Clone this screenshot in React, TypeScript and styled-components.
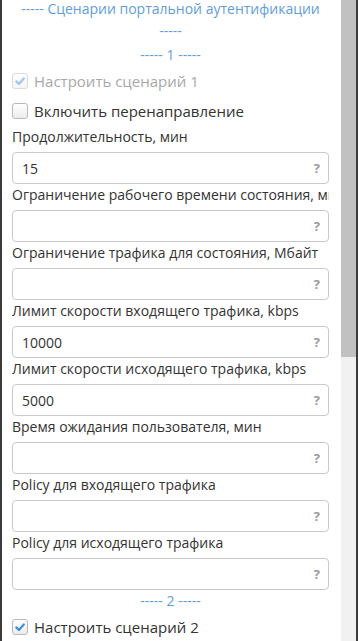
import styled, { createGlobalStyle } from "styled-components";

const GlobalStyle = createGlobalStyle`
  html, body {
    margin: 0;
    padding: 0;
    background: #fff;
  }
  body {
    font-family: "Open Sans", "Liberation Sans", sans-serif;
    color: #333;
  }
`;

type Field = {
  label: string;
  value?: string;
};

const fields: Field[] = [
  { label: "Продолжительность, мин", value: "15" },
  { label: "Ограничение рабочего времени состояния, мин" },
  { label: "Ограничение трафика для состояния, Мбайт" },
  { label: "Лимит скорости входящего трафика, kbps", value: "10000" },
  { label: "Лимит скорости исходящего трафика, kbps", value: "5000" },
  { label: "Время ожидания пользователя, мин" },
  { label: "Policy для входящего трафика" },
  { label: "Policy для исходящего трафика" },
];

function Check({ checked, disabled }: { checked?: boolean; disabled?: boolean }) {
  return (
    <Box $disabled={disabled}>
      {checked && (
        <svg width="12" height="12" viewBox="0 0 12 12">
          <path d="M2.3 6.4 L4.9 8.9 L9.8 3.4" fill="none" stroke="#3f8ede" strokeWidth="2.2" strokeLinecap="round" strokeLinejoin="round" />
        </svg>
      )}
    </Box>
  );
}

export default function App() {
  return (
    <>
      <GlobalStyle />
      <Frame>
        <Content>
          <Title>
            ----- Сценарии портальной аутентификации
            <br />
            -----
          </Title>
          <Heading>----- 1 -----</Heading>
          <CheckRow $disabled>
            <Check checked disabled />
            Настроить сценарий 1
          </CheckRow>
          <CheckRow>
            <Check />
            Включить перенаправление
          </CheckRow>
          {fields.map((f) => (
            <FieldBlock key={f.label}>
              <Label>{f.label}</Label>
              <InputBox>
                <Value>{f.value ?? ""}</Value>
                <Hint>?</Hint>
              </InputBox>
            </FieldBlock>
          ))}
          <Heading>----- 2 -----</Heading>
          <CheckRow>
            <Check checked />
            Настроить сценарий 2
          </CheckRow>
        </Content>
        <ScrollTrack>
          <ScrollThumb />
        </ScrollTrack>
      </Frame>
    </>
  );
}

const Frame = styled.div`
  display: flex;
  height: 641px;
  overflow: hidden;
  border-left: 2px solid #3b3b3b;
  border-right: 2px solid #3b3b3b;
  box-sizing: border-box;
`;

const Content = styled.div`
  flex: 1;
  min-width: 0;
  padding: 0 12px 0 10px;
  background: #fff;
`;

const Heading = styled.div`
  text-align: center;
  font-size: 14px;
  line-height: 22px;
  color: #5f9edb;
  white-space: nowrap;
`;

const Title = styled(Heading)`
  margin-top: -2px;
  padding-bottom: 2px;
`;

const CheckRow = styled.label<{ $disabled?: boolean }>`
  display: flex;
  align-items: center;
  gap: 6px;
  height: 30px;
  font-size: 15px;
  color: ${(p) => (p.$disabled ? "#a8a8a8" : "#333")};
`;

const Box = styled.span<{ $disabled?: boolean }>`
  display: flex;
  align-items: center;
  justify-content: center;
  width: 14px;
  height: 14px;
  border: 1px solid #b9b9b9;
  border-radius: 3px;
  background: linear-gradient(#ffffff, #ececec);
  opacity: ${(p) => (p.$disabled ? 0.5 : 1)};
`;

const FieldBlock = styled.div`
  display: flex;
  flex-direction: column;
`;

const Label = styled.div`
  font-size: 14px;
  line-height: 22px;
  margin-bottom: 4px;
  white-space: nowrap;
  overflow: hidden;
  color: #333;
`;

const InputBox = styled.div`
  display: flex;
  align-items: center;
  height: 32px;
  box-sizing: border-box;
  border: 1px solid #c9c9c9;
  border-radius: 4px;
  padding: 0 8px 0 9px;
  background: #fff;
`;

const Value = styled.span`
  flex: 1;
  font-size: 14px;
  color: #333;
`;

const Hint = styled.span`
  font-size: 13px;
  font-weight: 700;
  color: #9a9a9a;
`;

const ScrollTrack = styled.div`
  width: 15px;
  flex-shrink: 0;
  background: #f1f1f1;
`;

const ScrollThumb = styled.div`
  height: 357px;
  background: #c1c1c1;
`;
